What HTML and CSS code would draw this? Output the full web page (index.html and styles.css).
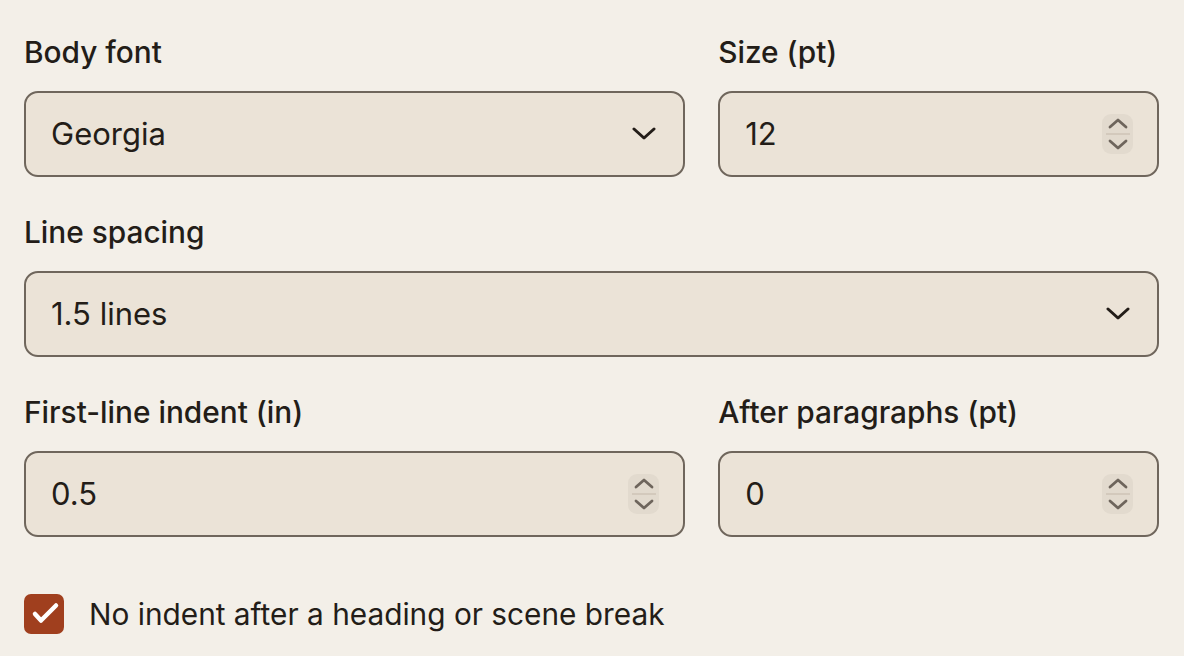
FILE: index.html
```html
<!DOCTYPE html>
<html>
<head>
<meta charset="utf-8">
<link rel="stylesheet" href="styles.css">
</head>
<body>
<div class="panel">
  <div class="row two">
    <div class="field">
      <div class="label">Body font</div>
      <div class="control">
        <span class="value">Georgia</span>
        <svg class="chev" width="24" height="14" viewBox="0 0 24 14"><path d="M2 2 L12 11 L22 2" fill="none" stroke="#231d18" stroke-width="3" stroke-linecap="round" stroke-linejoin="round"/></svg>
      </div>
    </div>
    <div class="field">
      <div class="label">Size (pt)</div>
      <div class="control">
        <span class="value">12</span>
        <span class="stepper">
          <svg width="32" height="40" viewBox="0 0 32 40"><path d="M8 13 L16 6 L24 13" fill="none" stroke="#6e655c" stroke-width="2.8" stroke-linecap="round" stroke-linejoin="round"/><path d="M4 20 H28" stroke="#d3c9bc" stroke-width="2"/><path d="M8 27 L16 34 L24 27" fill="none" stroke="#6e655c" stroke-width="2.8" stroke-linecap="round" stroke-linejoin="round"/></svg>
        </span>
      </div>
    </div>
  </div>
  <div class="row">
    <div class="field">
      <div class="label">Line spacing</div>
      <div class="control">
        <span class="value">1.5 lines</span>
        <svg class="chev" width="24" height="14" viewBox="0 0 24 14"><path d="M2 2 L12 11 L22 2" fill="none" stroke="#231d18" stroke-width="3" stroke-linecap="round" stroke-linejoin="round"/></svg>
      </div>
    </div>
  </div>
  <div class="row two">
    <div class="field">
      <div class="label">First-line indent (in)</div>
      <div class="control">
        <span class="value">0.5</span>
        <span class="stepper">
          <svg width="32" height="40" viewBox="0 0 32 40"><path d="M8 13 L16 6 L24 13" fill="none" stroke="#6e655c" stroke-width="2.8" stroke-linecap="round" stroke-linejoin="round"/><path d="M4 20 H28" stroke="#d3c9bc" stroke-width="2"/><path d="M8 27 L16 34 L24 27" fill="none" stroke="#6e655c" stroke-width="2.8" stroke-linecap="round" stroke-linejoin="round"/></svg>
        </span>
      </div>
    </div>
    <div class="field">
      <div class="label">After paragraphs (pt)</div>
      <div class="control">
        <span class="value">0</span>
        <span class="stepper">
          <svg width="32" height="40" viewBox="0 0 32 40"><path d="M8 13 L16 6 L24 13" fill="none" stroke="#6e655c" stroke-width="2.8" stroke-linecap="round" stroke-linejoin="round"/><path d="M4 20 H28" stroke="#d3c9bc" stroke-width="2"/><path d="M8 27 L16 34 L24 27" fill="none" stroke="#6e655c" stroke-width="2.8" stroke-linecap="round" stroke-linejoin="round"/></svg>
        </span>
      </div>
    </div>
  </div>
  <label class="check">
    <span class="box">
      <svg width="40" height="40" viewBox="0 0 40 40"><path d="M11 20 L17 26.5 L32 11.5" fill="none" stroke="#ffffff" stroke-width="4.5" stroke-linecap="round" stroke-linejoin="round"/></svg>
    </span>
    <span class="check-text">No indent after a heading or scene break</span>
  </label>
</div>
</body>
</html>
```
FILE: styles.css
```css
html, body {
  margin: 0;
  padding: 0;
  background: #f3efe8;
}
body {
  font-family: Inter, "Noto Sans", sans-serif;
  color: #231d18;
}
.panel {
  padding: 35px 25px 0 24px;
  display: flex;
  flex-direction: column;
}
.row {
  display: grid;
  grid-template-columns: 1fr;
  margin-bottom: 38px;
}
.row.two {
  grid-template-columns: 3fr 2fr;
  column-gap: 33px;
}
.label {
  font-size: 29.8px;
  font-weight: 500;
  line-height: 34px;
  height: 34px;
  margin-bottom: 22px;
  color: #231d18;
}
.control {
  box-sizing: border-box;
  height: 86px;
  border: 2px solid #6f665c;
  border-radius: 14px;
  background: #ebe3d7;
  display: flex;
  align-items: center;
  justify-content: space-between;
  padding: 0 26px 0 25px;
}
.value {
  font-size: 31px;
  font-weight: 400;
  line-height: 36px;
}
.chev {
  display: block;
  margin-right: 1px;
}
.stepper {
  display: block;
  width: 31px;
  height: 40px;
  border-radius: 9px;
  background: #e2dace;
  margin-right: -2px;
}
.stepper svg {
  display: block;
}
.check {
  display: flex;
  align-items: center;
  margin-top: 19px;
}
.box {
  width: 40px;
  height: 40px;
  border-radius: 7px;
  background: #a03f1e;
  display: block;
  flex: none;
}
.box svg {
  display: block;
}
.check-text {
  margin-left: 25px;
  font-size: 29.8px;
  line-height: 36px;
  color: #231d18;
}
```
